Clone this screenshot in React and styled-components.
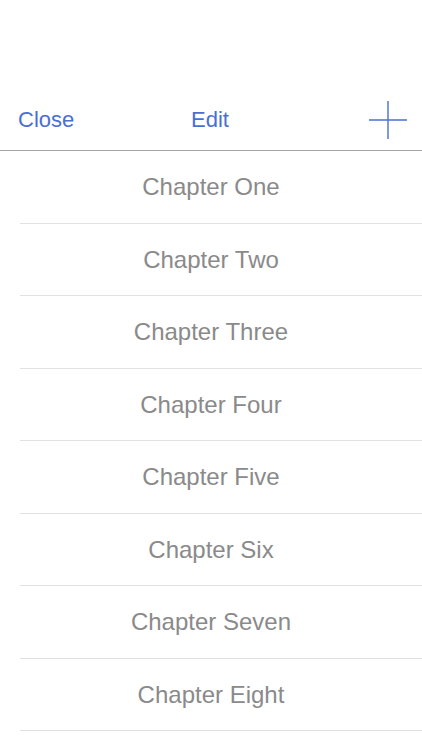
import React from 'react';
import styled, { createGlobalStyle } from 'styled-components';

const chapters = ['One', 'Two', 'Three', 'Four', 'Five', 'Six', 'Seven', 'Eight'];

export default function App() {
  return (
    <Screen>
      <GlobalStyle />
      <NavBar>
        <NavButton>Close</NavButton>
        <NavTitle>Edit</NavTitle>
        <AddButton aria-label="Add">
          <svg width="40" height="40" viewBox="0 0 40 40">
            <path d="M20 1V39M1 20H39" stroke="#4a6fd3" strokeWidth="1.4" fill="none" />
          </svg>
        </AddButton>
      </NavBar>
      <List>
        {chapters.map((name) => (
          <Row key={name}>Chapter {name}</Row>
        ))}
      </List>
    </Screen>
  );
}

const GlobalStyle = createGlobalStyle`
  body {
    margin: 0;
    background: #fff;
    font-family: "Liberation Sans", Arial, sans-serif;
  }
`;

const Screen = styled.div`
  width: 422px;
  min-height: 750px;
  padding-top: 90px;
  box-sizing: border-box;
  background: #fff;
  overflow: hidden;
`;

const NavBar = styled.header`
  display: grid;
  grid-template-columns: 1fr auto 1fr;
  align-items: center;
  height: 60px;
  padding: 0 14px 0 18px;
  border-bottom: 1.5px solid #a3a3a3;
`;

const NavButton = styled.span`
  justify-self: start;
  font-size: 22px;
  color: #4a6fd3;
`;

const NavTitle = styled.span`
  font-size: 22px;
  color: #4a6fd3;
  margin-left: -6px;
`;

const AddButton = styled.span`
  justify-self: end;
  display: flex;
`;

const List = styled.ul`
  margin: 0;
  padding: 0 0 0 20px;
  list-style: none;
`;

const Row = styled.li`
  display: flex;
  align-items: center;
  justify-content: center;
  height: 72.5px;
  box-sizing: border-box;
  padding: 1px 20px 0 0;
  border-bottom: 1px solid #e2e2e2;
  font-size: 24px;
  color: #8a8a8a;
`;
